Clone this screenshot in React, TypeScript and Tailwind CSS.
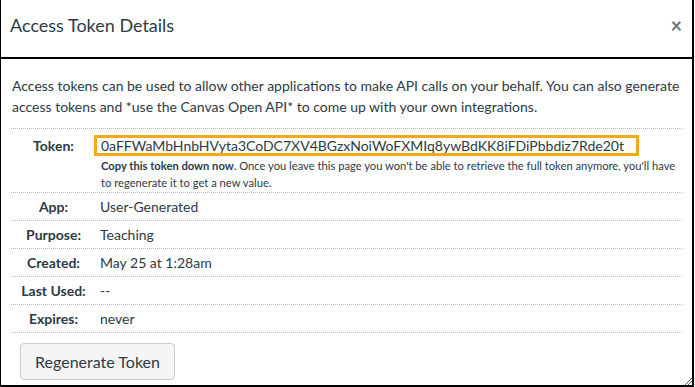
import React from "react";

const rows: { label: string; value: string }[] = [
  { label: "App:", value: "User-Generated" },
  { label: "Purpose:", value: "Teaching" },
  { label: "Created:", value: "May 25 at 1:28am" },
  { label: "Last Used:", value: "--" },
  { label: "Expires:", value: "never" },
];

export default function App() {
  return (
    <div
      className="relative w-[695px] h-[387px] bg-white text-[#2d3b45] overflow-hidden"
      style={{ fontFamily: "Lato, 'Noto Sans', sans-serif" }}
    >
      <div className="w-[694px] h-[387px] border-l border-r-2 border-b-2 border-black flex flex-col">
        <div className="h-[59px] border-b-2 border-black flex items-center justify-between pl-[9px] pr-[10px] pb-[8px]">
          <h1 className="text-[18px] leading-none">Access Token Details</h1>
          <span className="text-[20px] leading-none text-[#6b7780] font-bold">×</span>
        </div>
        <div className="px-[10px] pt-[16px]">
          <p className="text-[14px] leading-[21px] pl-[1px]">
            Access tokens can be used to allow other applications to make API calls on your behalf. You can also generate access tokens and *use the Canvas Open API* to come up with your own integrations.
          </p>
          <div className="mt-[11px] border-t border-dotted border-[#b5bcc2]">
            <div className="flex border-b border-dotted border-[#b5bcc2] h-[64px]">
              <div className="w-[83px] text-center text-[14px] font-bold pt-[6px] pl-[2px]">Token:</div>
              <div className="flex-1 pt-[6px]">
                <div className="w-[545px] h-[21px] border-[3px] border-[#f5a81c] flex items-center pl-[4px] text-[14px] leading-none">
                  0aFFWaMbHnbHVyta3CoDC7XV4BGzxNoiWoFXMIq8ywBdKK8iFDiPbbdiz7Rde20t
                </div>
                <div className="text-[11.2px] leading-[17px] pl-[7px] pr-[1px] pt-[1px]">
                  <span className="font-bold">Copy this token down now</span>. Once you leave this page you won't be able to retrieve the full token anymore, you'll have to regenerate it to get a new value.
                </div>
              </div>
            </div>
            {rows.map((r) => (
              <div key={r.label} className="flex items-center border-b border-dotted border-[#b5bcc2] h-[28px] text-[14px]">
                <div className="w-[83px] text-center font-bold pl-[2px]">{r.label}</div>
                <div className="flex-1 pl-[6px]">{r.value}</div>
              </div>
            ))}
          </div>
          <button className="mt-[10px] ml-[9px] w-[155px] h-[37px] bg-[#f5f5f5] border border-[#c7cdd1] rounded-[4px] text-[16px] text-[#2d3b45]">
            Regenerate Token
          </button>
        </div>
      </div>
      <svg className="absolute right-[3px] bottom-[2px]" width="8" height="8" viewBox="0 0 8 8">
        <path d="M1 8 L8 1 M4 8 L8 4" stroke="#555" strokeWidth="1" />
      </svg>
    </div>
  );
}
